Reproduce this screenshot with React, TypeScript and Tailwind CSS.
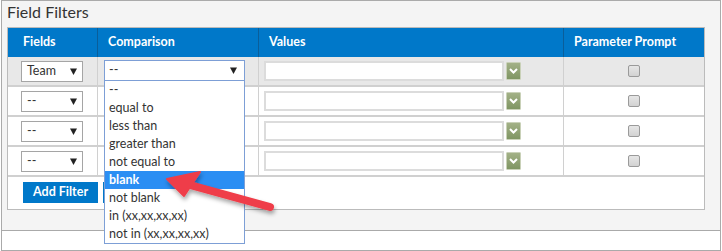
import React from 'react';

const options = [
  '--',
  'equal to',
  'less than',
  'greater than',
  'not equal to',
  'blank',
  'not blank',
  'in (xx,xx,xx,xx)',
  'not in (xx,xx,xx,xx)',
];

const rows = ['Team', '--', '--', '--'];

const Caret = () => (
  <svg width="7" height="7" viewBox="0 0 7 7">
    <path d="M0 0.5 L7 0.5 L3.5 7 Z" fill="#222" />
  </svg>
);

const GreenButton = () => (
  <div className="w-[15px] h-[18px] rounded-[1px] border border-[#c9d1b8] bg-gradient-to-b from-[#a3b187] to-[#7f9563] flex items-center justify-center">
    <svg width="9" height="6" viewBox="0 0 9 6">
      <path d="M1 1 L4.5 4.5 L8 1" stroke="white" strokeWidth="2" fill="none" />
    </svg>
  </div>
);

const Checkbox = () => (
  <div className="w-[12px] h-[12px] rounded-[2px] border border-[#9a9a9a] bg-gradient-to-b from-[#e6e6e6] to-[#d2d2d2]" />
);

const App = () => {
  return (
    <div className="relative w-[722px] h-[251px] bg-white font-['Lato',sans-serif] text-[#333]">
      <div className="ml-px w-[720px] h-[231px] border border-[#aaa] bg-[#f4f4f4] flex flex-col">
        <div className="h-[26px] pl-[5px] text-[16px] leading-[22px] text-[#333]">Field Filters</div>
        <div className="ml-[5px] w-[698px] h-[183px] border border-[#bbb] bg-white flex flex-col">
          <div className="grid grid-cols-[89px_161px_305px_141px] h-[29px] bg-[#0078c9] text-white text-[12.5px] font-bold">
            <div className="pl-[15px] flex items-center">Fields</div>
            <div className="pl-[10px] flex items-center border-l border-[#0a5e9a]">Comparison</div>
            <div className="pl-[10px] flex items-center border-l border-[#0a5e9a]">Values</div>
            <div className="pl-[10px] flex items-center border-l border-[#0a5e9a]">Parameter Prompt</div>
          </div>
          {rows.map((r, i) => (
            <div
              key={i}
              className={
                'grid grid-cols-[89px_161px_305px_141px] h-[30px] border-b-2 border-[#d0d0d0] ' +
                (i === 0 ? 'bg-[#e8e8e8]' : 'bg-white')
              }
            >
              <div className="pl-[13px] flex items-center">
                <div className="w-[62px] h-[21px] border border-[#a5a5a5] bg-white flex items-center justify-between pl-[5px] pr-[5px] text-[12.5px]">
                  <span>{r}</span>
                  <Caret />
                </div>
              </div>
              <div className="border-l border-[#d0d0d0]" />
              <div className="border-l border-[#d0d0d0] pl-[5px] flex items-center gap-[2px]">
                <div className="w-[240px] h-[20px] border-2 border-[#dcdcdc] bg-white" />
                <GreenButton />
              </div>
              <div className="border-l border-[#d0d0d0] flex items-center justify-center">
                <Checkbox />
              </div>
            </div>
          ))}
          <div className="flex gap-[5px] pl-[15px] pt-[5px]">
            <button className="h-[21px] px-[10px] bg-[#0078c9] text-white text-[12.5px] font-bold leading-none">Add Filter</button>
            <button className="h-[21px] w-[50px] bg-[#0078c9]" />
          </div>
        </div>
      </div>
      <div className="ml-px w-[720px] h-[20px] border-x border-b border-[#aaa] bg-white" />

      {/* open comparison dropdown */}
      <div className="absolute left-[104px] top-[60px] w-[141px] text-[12.5px]">
        <div className="h-[21px] border border-[#7d9fd6] bg-white flex items-center justify-between pl-[4px] pr-[7px]">
          <span>--</span>
          <Caret />
        </div>
        <div className="border-x border-b border-[#7d9fd6] bg-white">
          {options.map((o) => (
            <div
              key={o}
              className={
                'h-[18px] pl-[4px] flex items-center leading-[18px] ' +
                (o === 'blank' ? 'bg-[#2b8ef3] text-white font-bold' : 'text-[#333]')
              }
            >
              {o}
            </div>
          ))}
        </div>
      </div>

      {/* red arrow */}
      <svg className="absolute left-0 top-0 pointer-events-none" width="722" height="251">
        <defs>
          <filter id="sh" x="-20%" y="-20%" width="140%" height="160%">
            <feDropShadow dx="1" dy="3" stdDeviation="2" floodColor="#000" floodOpacity="0.35" />
          </filter>
        </defs>
        <g filter="url(#sh)" fill="#ef3d48" stroke="#ef3d48">
          <path d="M190 185 L270 207" strokeWidth="8" strokeLinecap="round" fill="none" />
          <path d="M167 179 L200 172 L184 196 Z" strokeWidth="2" strokeLinejoin="round" />
        </g>
      </svg>
    </div>
  );
};

export default App;
